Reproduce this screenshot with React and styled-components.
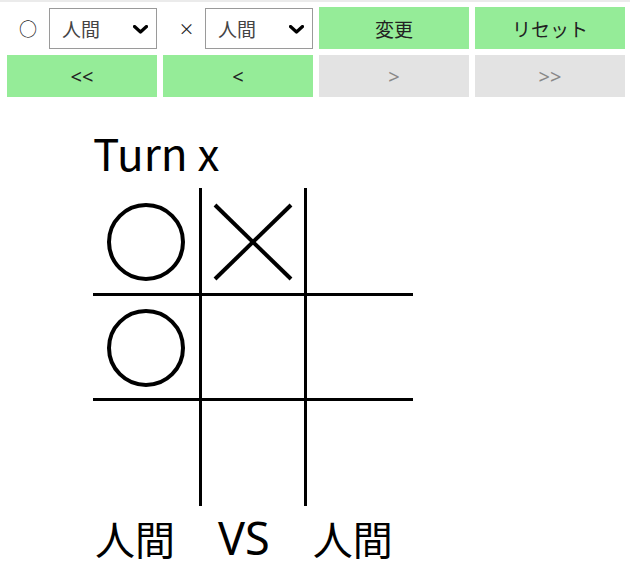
import { useState } from "react";
import styled, { createGlobalStyle } from "styled-components";

const GlobalStyle = createGlobalStyle`
  body {
    margin: 0;
    border-top: 2px solid #ebebeb;
    background: #fff;
    font-family: "Noto Sans CJK JP", "Noto Sans", sans-serif;
    color: #000;
  }
`;

const Controls = styled.div`
  display: grid;
  grid-template-columns: repeat(4, 150px);
  grid-auto-rows: 42px;
  gap: 6px;
  padding: 5px 7px 0;
`;

const Picker = styled.div`
  display: flex;
  align-items: center;
`;

const Mark = styled.span`
  width: 42px;
  text-align: center;
  font-size: ${(p) => p.size || 17}px;
  color: #222;
  padding-left: ${(p) => p.shift || 0}px;
  box-sizing: border-box;
`;

const SelectWrap = styled.div`
  position: relative;
  flex: 1;
  height: 41px;
  margin-top: 1px;
`;

const Select = styled.select`
  appearance: none;
  width: 100%;
  height: 100%;
  border: 1px solid #9a9a9a;
  border-radius: 0;
  background: #fff;
  padding: 0 12px;
  font-family: inherit;
  font-size: 19px;
  color: #444;
  outline: none;
`;

const Chevron = styled.svg`
  position: absolute;
  right: 9px;
  top: 17px;
  pointer-events: none;
`;

const Button = styled.button`
  border: none;
  border-radius: 0;
  background: ${(p) => (p.disabled ? "#e3e3e3" : "#95ec98")};
  color: ${(p) => (p.disabled ? "#888" : "#222")};
  font-family: ${(p) => (p.latin ? '"Noto Sans", sans-serif' : "inherit")};
  font-size: ${(p) => p.size || 19}px;
  padding: 0;
`;

const Game = styled.div`
  margin-left: 93px;
  width: 320px;
`;

const Title = styled.div`
  font-size: 44px;
  line-height: 1;
  margin: 33px 0 0;
  height: 58px;
`;

const Board = styled.div`
  display: grid;
  grid-template-columns: 106px 102px 106px;
  grid-template-rows: 105px 102px 105px;
  gap: 3px;
  background: #000;
`;

const Cell = styled.div`
  background: #fff;
  display: flex;
  align-items: center;
  justify-content: center;
  padding-top: ${(p) => (p.row === 0 ? 2 : 1)}px;
`;

const Players = styled.div`
  display: flex;
  align-items: baseline;
  gap: 43px;
  font-size: 40px;
  line-height: 40px;
  height: 44px;
  margin-top: 12px;
  padding-left: 2px;
`;

const Name = styled.span`
  font-family: ${(p) => (p.latin ? '"Noto Sans", sans-serif' : "inherit")};
  font-size: ${(p) => (p.latin ? 45 : 40)}px;
`;

function Circle() {
  return (
    <svg width="80" height="80" viewBox="0 0 80 80">
      <circle cx="40" cy="40" r="37" fill="none" stroke="#000" strokeWidth="4" />
    </svg>
  );
}

function Cross() {
  return (
    <svg width="80" height="78" viewBox="0 0 80 78">
      <line x1="2" y1="2" x2="78" y2="76" stroke="#000" strokeWidth="4" />
      <line x1="78" y1="2" x2="2" y2="76" stroke="#000" strokeWidth="4" />
    </svg>
  );
}

function PlayerSelect({ label, size, shift }) {
  const [value, setValue] = useState("human");
  return (
    <Picker>
      <Mark size={size} shift={shift}>{label}</Mark>
      <SelectWrap>
        <Select value={value} onChange={(e) => setValue(e.target.value)}>
          <option value="human">人間</option>
          <option value="cpu">CPU</option>
        </Select>
        <Chevron width="15" height="9" viewBox="0 0 15 9">
          <polyline points="1.5,1.5 7.5,7 13.5,1.5" fill="none" stroke="#000" strokeWidth="3.2" strokeLinecap="round" strokeLinejoin="round" />
        </Chevron>
      </SelectWrap>
    </Picker>
  );
}

const cells = ["o", "x", "", "o", "", "", "", "", ""];

export default function App() {
  return (
    <>
      <GlobalStyle />
      <Controls>
        <PlayerSelect label="○" size={18} />
        <PlayerSelect label="×" size={16} shift={5} />
        <Button>変更</Button>
        <Button>リセット</Button>
        <Button latin size={20}>&lt;&lt;</Button>
        <Button latin size={20}>&lt;</Button>
        <Button latin size={20} disabled>&gt;</Button>
        <Button latin size={20} disabled>&gt;&gt;</Button>
      </Controls>
      <Game>
        <Title>Turn x</Title>
        <Board>
          {cells.map((c, i) => (
            <Cell key={i} row={Math.floor(i / 3)}>
              {c === "o" && <Circle />}
              {c === "x" && <Cross />}
            </Cell>
          ))}
        </Board>
        <Players>
          <Name>人間</Name>
          <Name latin>VS</Name>
          <Name>人間</Name>
        </Players>
      </Game>
    </>
  );
}
